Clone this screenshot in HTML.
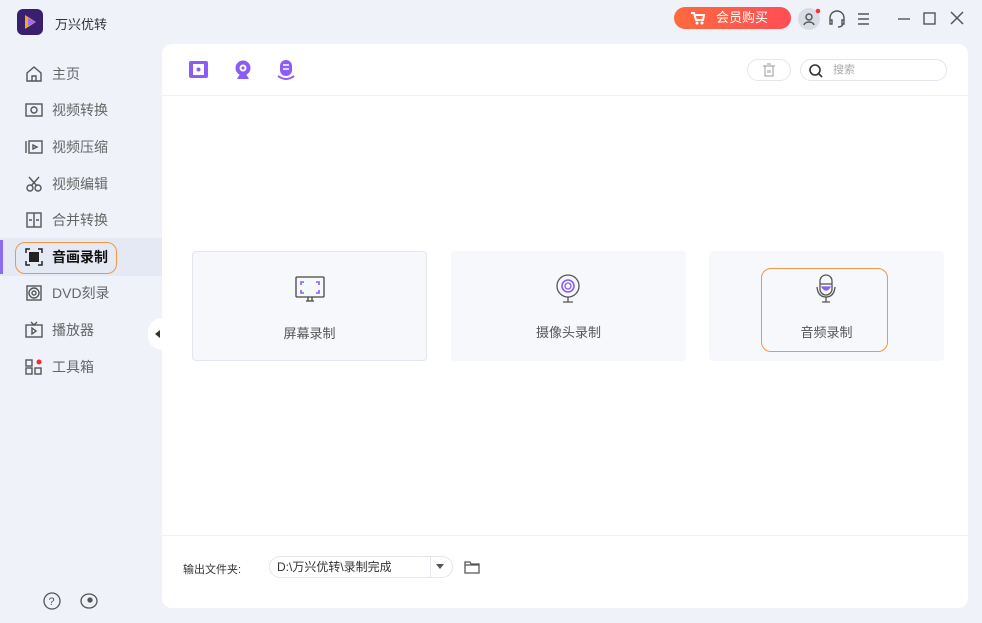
<!DOCTYPE html>
<html><head><meta charset="utf-8"><style>
*{margin:0;padding:0;box-sizing:border-box}
body{width:982px;height:623px;background:#eff2f9;font-family:"Liberation Sans","Noto Sans CJK SC",sans-serif;position:relative;overflow:hidden;color:#333}
.abs{position:absolute}
.nav{position:absolute;left:24px;font-size:14px;color:#666;display:flex;align-items:center}
.nav svg{width:20px;height:20px;margin-right:8px}
.main{position:absolute;left:162px;top:44px;width:806px;height:564px;background:#fff;border-radius:10px}
.card{position:absolute;top:251px;width:235px;height:110px;background:#f7f8fb;border-radius:4px;font-size:13px;color:#555;text-align:center}
.card span{position:absolute;left:0;right:0;top:71px}
.card svg{position:absolute;left:101px;top:22px}
</style></head><body>
<div class="abs" style="left:17px;top:9px;width:26px;height:26px;border-radius:6px;background:#3a1f6e"><svg width="26" height="26"><path d="M8 6 L19 13 L8 20Z" fill="#f5a623"/><path d="M11 9 L19 13 L11 17Z" fill="#9b6cff"/></svg></div>
<div class="abs" style="left:55px;top:14px;font-size:13px;color:#333">万兴优转</div>

<div class="abs" style="left:0;top:238px;width:162px;height:38px;background:#e5e9f3"></div>
<div class="abs" style="left:0;top:240px;width:3px;height:34px;background:#8b6cf0"></div>
<div class="abs" style="left:15px;top:242px;width:102px;height:32px;border:1.5px solid #f0964a;border-radius:10px"></div>

<div class="nav" style="top:64px"><svg viewBox="0 0 20 20" fill="none" stroke="#555" stroke-width="1.4"><path d="M3 9 L10 3 L17 9 V17 H3Z M8 17 V12 H12 V17"/></svg>主页</div>
<div class="nav" style="top:100px"><svg viewBox="0 0 20 20" fill="none" stroke="#555" stroke-width="1.4"><rect x="2" y="4" width="16" height="12"/><circle cx="10" cy="10" r="3"/></svg>视频转换</div>
<div class="nav" style="top:137px"><svg viewBox="0 0 20 20" fill="none" stroke="#555" stroke-width="1.4"><rect x="5" y="4" width="13" height="12"/><path d="M2 4V16M9 8L13 10L9 12Z"/></svg>视频压缩</div>
<div class="nav" style="top:174px"><svg viewBox="0 0 20 20" fill="none" stroke="#555" stroke-width="1.4"><circle cx="6" cy="14" r="3"/><circle cx="14" cy="14" r="3"/><path d="M5 3L13 12M15 3L7 12"/></svg>视频编辑</div>
<div class="nav" style="top:210px"><svg viewBox="0 0 20 20" fill="none" stroke="#555" stroke-width="1.4"><rect x="3" y="3" width="14" height="14"/><path d="M10 3V17M5 10H8M12 10H15"/></svg>合并转换</div>
<div class="nav" style="top:247px;color:#111;font-weight:bold"><svg viewBox="0 0 20 20"><rect x="5" y="5" width="10" height="10" fill="#222"/><path d="M2 6V2H6M14 2H18V6M18 14V18H14M6 18H2V14" stroke="#222" stroke-width="1.5" fill="none"/></svg>音画录制</div>
<div class="nav" style="top:283px"><svg viewBox="0 0 20 20" fill="none" stroke="#555" stroke-width="1.4"><rect x="3" y="3" width="14" height="14"/><circle cx="10" cy="10" r="5"/><circle cx="10" cy="10" r="2"/></svg>DVD刻录</div>
<div class="nav" style="top:320px"><svg viewBox="0 0 20 20" fill="none" stroke="#555" stroke-width="1.4"><rect x="2" y="5" width="16" height="12"/><path d="M7 2L10 5L13 2M8 8L12 11L8 14Z"/></svg>播放器</div>
<div class="nav" style="top:357px"><svg viewBox="0 0 20 20" fill="none" stroke="#555" stroke-width="1.4"><rect x="2" y="3" width="6" height="6"/><rect x="2" y="11" width="6" height="6"/><rect x="11" y="11" width="6" height="6"/><circle cx="15" cy="5" r="2.5" fill="#f23" stroke="none"/></svg>工具箱</div>

<svg class="abs" style="left:42px;top:591px" width="60" height="20" fill="none" stroke="#555" stroke-width="1.3"><circle cx="10" cy="10" r="8"/><text x="6.5" y="14" font-size="11" fill="#555" stroke="none" font-family="Liberation Sans">?</text><ellipse cx="47" cy="10" rx="8" ry="7"/><circle cx="48" cy="9" r="2" fill="#555"/></svg>

<div class="abs" style="left:674px;top:7px;width:117px;height:22px;border-radius:11px;background:linear-gradient(90deg,#ff6a3d,#ff4d55);color:#fff;font-size:13px;line-height:22px;padding-left:42px">会员购买</div>
<svg class="abs" style="left:690px;top:11px" width="16" height="14"><path d="M1 2H4L6 9H13L14 4H5" stroke="#fff" stroke-width="2" fill="none"/><circle cx="7" cy="12" r="1.5" fill="#fff"/><circle cx="12" cy="12" r="1.5" fill="#fff"/></svg>
<div class="abs" style="left:798px;top:8px;width:22px;height:22px;border-radius:50%;background:#d8dce6"></div>
<svg class="abs" style="left:798px;top:8px" width="145" height="22" fill="none" stroke="#555" stroke-width="1.4"><circle cx="11" cy="9" r="3"/><path d="M6 17C7 13 15 13 16 17"/><circle cx="20" cy="3" r="2.3" fill="#f33" stroke="none"/><path d="M32 13V10A7 7 0 0 1 46 10V13M32 12H34V16H32ZM44 12H46V16H44ZM45 16Q44 19 40 19"/><path d="M60 6H71M60 11H71M60 16H71"/><path d="M100 11H112"/><rect x="126" y="5" width="11" height="11"/></svg>
<svg class="abs" style="left:950px;top:11px" width="14" height="14" stroke="#555" stroke-width="1.5"><path d="M1 1L13 13M13 1L1 13"/></svg>

<div class="main">
 <svg class="abs" style="left:26px;top:15px" width="110" height="22"><rect x="1" y="2" width="19" height="17" rx="2" fill="#8b5cf6"/><rect x="5" y="5" width="11" height="11" fill="#fff"/><circle cx="10.5" cy="10.5" r="2" fill="#8b5cf6"/>
 <circle cx="55" cy="9" r="7.5" fill="#8b5cf6"/><circle cx="55" cy="9" r="3.5" fill="#fff"/><circle cx="55" cy="9" r="1.5" fill="#8b5cf6"/><path d="M49 20H61L58 15H52Z" fill="#8b5cf6"/>
 <rect x="92" y="1" width="12" height="16" rx="6" fill="#8b5cf6"/><path d="M95 6H101M95 10H101" stroke="#fff" stroke-width="1.5"/><path d="M90 17Q98 23 106 17" stroke="#8b5cf6" stroke-width="2" fill="none"/></svg>
 <div class="abs" style="left:585px;top:15px;width:44px;height:22px;border:1px solid #e3e6ee;border-radius:11px"></div>
 <svg class="abs" style="left:601px;top:19px" width="12" height="14" fill="none" stroke="#999"><rect x="2" y="3" width="8" height="10"/><path d="M0 3H12M4 1H8M5 7V10M7 7V10"/></svg>
 <div class="abs" style="left:638px;top:15px;width:147px;height:22px;border:1px solid #e3e6ee;border-radius:11px;font-size:11px;color:#aaa;line-height:20px;padding-left:32px">搜索</div>
 <svg class="abs" style="left:647px;top:20px" width="14" height="14" fill="none" stroke="#333" stroke-width="1.6"><circle cx="6" cy="6" r="5"/><path d="M10 10L13 13"/></svg>
 <div class="abs" style="left:0;top:51px;width:806px;height:1px;background:#f0f1f5"></div>
 <div class="abs" style="left:0;top:491px;width:806px;height:1px;background:#f0f1f5"></div>
 <div class="abs" style="left:21px;top:517px;font-size:11px;color:#333">输出文件夹:</div>
 <div class="abs" style="left:107px;top:512px;width:184px;height:22px;border:1px solid #e3e6ee;border-radius:11px;font-size:12px;color:#333;line-height:20px;padding-left:7px">D:\万兴优转\录制完成</div>
 <div class="abs" style="left:268px;top:513px;width:1px;height:20px;background:#e3e6ee"></div>
 <svg class="abs" style="left:274px;top:520px" width="8" height="6"><path d="M0 0H8L4 5Z" fill="#555"/></svg>
 <svg class="abs" style="left:302px;top:516px" width="16" height="14" fill="none" stroke="#555" stroke-width="1.3"><path d="M1 2H6L7 4H15V13H1Z M1 5H15"/></svg>
</div>
<div class="abs" style="left:148px;top:318px;width:14px;height:32px;background:#fff;border-radius:14px 0 0 14px"></div>
<svg class="abs" style="left:155px;top:330px" width="5" height="8"><path d="M5 0V8L0 4Z" fill="#333"/></svg>

<div class="card" style="left:192px;border:1px solid #e3e6ee"><svg width="32" height="32" fill="none" stroke="#444" stroke-width="1.3"><rect x="2" y="3" width="28" height="20" rx="1"/><path d="M12 27H20M14 23V27M18 23V27"/><path d="M7 11V8H10M22 8H25V11M25 16V19H22M10 19H7V16" stroke="#8b5cf6" stroke-width="1.6"/></svg><span>屏幕录制</span></div>
<div class="card" style="left:451px"><svg width="32" height="32" fill="none" stroke="#555" stroke-width="1.3"><circle cx="16" cy="13" r="11"/><circle cx="16" cy="13" r="6" stroke="#8b5cf6" stroke-width="1.6"/><circle cx="16" cy="13" r="3" stroke="#8b5cf6"/><path d="M16 24V29M11 29H21"/></svg><span>摄像头录制</span></div>
<div class="card" style="left:709px"><svg width="32" height="32" fill="none" stroke="#555" stroke-width="1.3"><rect x="10" y="2" width="12" height="20" rx="6"/><path d="M10 11H22" /><path d="M12 14Q16 20 20 14Z" fill="#8b5cf6" stroke="#8b5cf6"/><path d="M7 14Q8 24 16 24Q24 24 25 14M16 24V29M12 29H20"/></svg><span>音频录制</span></div>
<div class="abs" style="left:761px;top:268px;width:127px;height:84px;border:1.5px solid #f0964a;border-radius:10px"></div>
</body></html>
